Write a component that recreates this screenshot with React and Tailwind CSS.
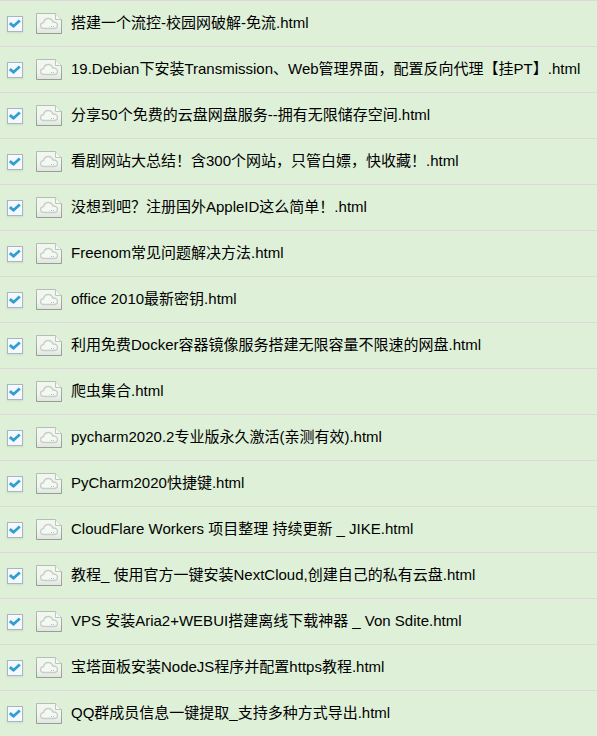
const files = [
  "搭建一个流控-校园网破解-免流.html",
  "19.Debian下安装Transmission、Web管理界面，配置反向代理【挂PT】.html",
  "分享50个免费的云盘网盘服务--拥有无限储存空间.html",
  "看剧网站大总结！含300个网站，只管白嫖，快收藏！.html",
  "没想到吧？注册国外AppleID这么简单！.html",
  "Freenom常见问题解决方法.html",
  "office 2010最新密钥.html",
  "利用免费Docker容器镜像服务搭建无限容量不限速的网盘.html",
  "爬虫集合.html",
  "pycharm2020.2专业版永久激活(亲测有效).html",
  "PyCharm2020快捷键.html",
  "CloudFlare Workers 项目整理 持续更新 _ JIKE.html",
  "教程_ 使用官方一键安装NextCloud,创建自己的私有云盘.html",
  "VPS 安装Aria2+WEBUI搭建离线下载神器 _ Von Sdite.html",
  "宝塔面板安装NodeJS程序并配置https教程.html",
  "QQ群成员信息一键提取_支持多种方式导出.html",
];

function FileIcon() {
  return (
    <svg className="h-[21px] w-[26px] shrink-0" viewBox="0 0 26 21" fill="none" aria-hidden="true">
      <defs>
        <linearGradient id="paper" x1="0" y1="0" x2="0" y2="1">
          <stop offset="0" stopColor="#f1f8ef" />
          <stop offset="0.6" stopColor="#f1f6f0" />
          <stop offset="1" stopColor="#e0e5df" />
        </linearGradient>
        <linearGradient id="edge" x1="0" y1="0" x2="0" y2="1">
          <stop offset="0" stopColor="#b4beb2" />
          <stop offset="1" stopColor="#969e94" />
        </linearGradient>
      </defs>
      <path d="M.5 .5H19.5L25.5 6.5V20.5H.5Z" fill="url(#paper)" stroke="url(#edge)" />
      <path d="M19.5 .5V6.5H25.5" fill="#f1f8ef" stroke="#bdc7bb" />
      <path
        d="M8 15.500C5.800 15.500 4.500 14.200 4.500 12.600C4.500 10.900 5.800 9.700 7.600 9.600C8 7 9.900 5.500 12.300 5.500C14.700 5.500 16.300 6.900 16.900 9.100C19.600 8.700 21.500 10.100 21.500 12.300C21.500 14.300 20 15.500 18 15.500Z"
        fill="#f4f9f3"
        stroke="#c8cfc6"
        strokeWidth="1.4"
      />
      <path d="M15 13h1v1h-1z" fill="#a9b5ac" />
      <path d="M17 13h1v1h-1z" fill="#9fc6d6" />
    </svg>
  );
}

function FileRow({ name }) {
  return (
    <li className="border-t border-[#dcdadd]">
      <label className="flex h-[45px] items-center pl-[7px]">
        <span className="mt-px grid size-4 shrink-0">
          <input
            type="checkbox"
            defaultChecked
            className="peer col-start-1 row-start-1 size-4 appearance-none border border-[#a9b4c4] bg-[#f5f9fd] shadow-[0_1px_2px_rgba(0,0,0,0.08)]"
          />
          <svg
            className="pointer-events-none invisible col-start-1 row-start-1 size-4 peer-checked:visible"
            viewBox="0 0 16 16"
            fill="none"
            aria-hidden="true"
          >
            <path d="M2.800 7.200L6.500 10.200L12.800 4.500" stroke="#309fd2" strokeWidth="2.800" />
          </svg>
        </span>
        <span className="ml-[13px] shrink-0">
          <FileIcon />
        </span>
        <span className="ml-[9px] whitespace-nowrap pb-0.5 text-[15px] leading-5">{name}</span>
      </label>
    </li>
  );
}

export default function App() {
  return (
    <main className="min-h-screen overflow-hidden bg-[#def0d8] font-['Liberation_Sans','Noto_Sans_CJK_SC',sans-serif] text-black">
      <ul>
        {files.map((name) => (
          <FileRow key={name} name={name} />
        ))}
      </ul>
    </main>
  );
}
